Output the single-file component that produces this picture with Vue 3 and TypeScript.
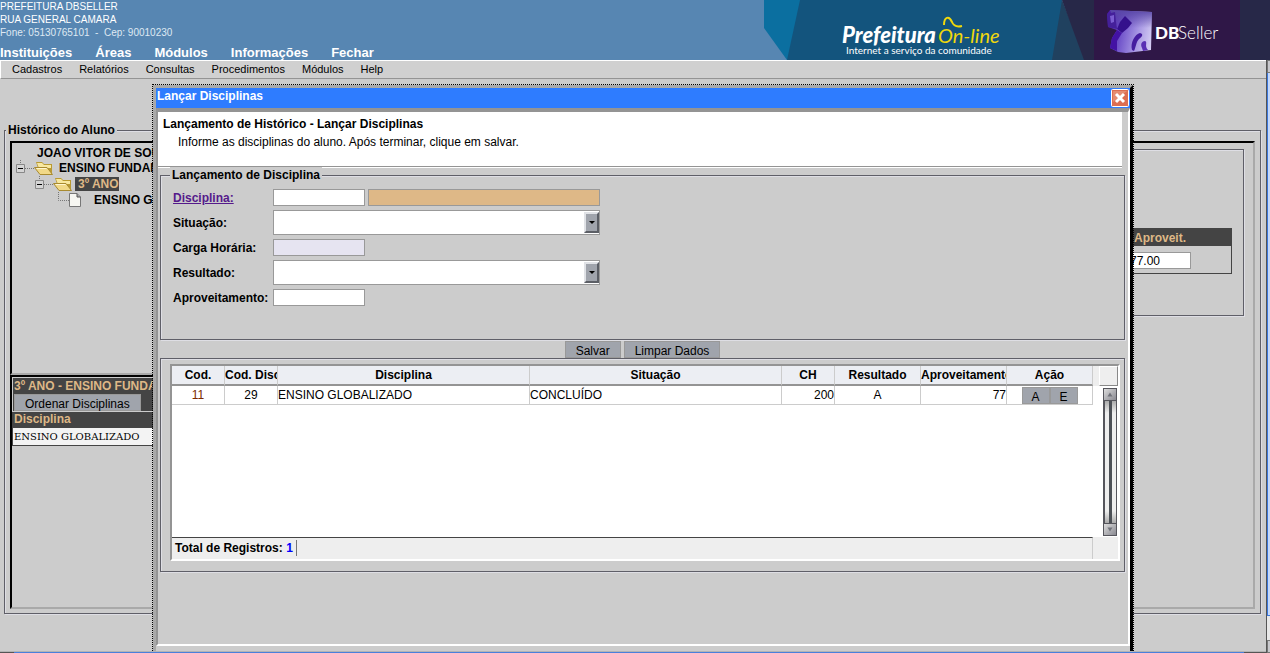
<script setup lang="ts">
import { ref } from 'vue'

interface Registro {
  cod: number
  codDisciplina: number
  disciplina: string
  situacao: string
  ch: number
  resultado: string
  aproveitamento: number
}

const menuPrincipal: string[] = ['Instituições', 'Áreas', 'Módulos', 'Informações', 'Fechar']
const menuModulo: string[] = ['Cadastros', 'Relatórios', 'Consultas', 'Procedimentos', 'Módulos', 'Help']

const registros = ref<Registro[]>([
  {
    cod: 11,
    codDisciplina: 29,
    disciplina: 'ENSINO GLOBALIZADO',
    situacao: 'CONCLUÍDO',
    ch: 200,
    resultado: 'A',
    aproveitamento: 77
  }
])

const codigo = ref('')
const descricao = ref('')
const situacao = ref('')
const carga = ref('')
const resultado = ref('')
const aproveitamento = ref('')
const notaFinal = ref('77.00')

function limpar(): void {
  codigo.value = ''
  descricao.value = ''
  situacao.value = ''
  carga.value = ''
  resultado.value = ''
  aproveitamento.value = ''
}
</script>

<template>
  <div class="page">
    <header class="banner">
      <div class="banner-info">
        <p>PREFEITURA DBSELLER</p>
        <p>RUA GENERAL CAMARA</p>
        <p class="phone">Fone: 05130765101&nbsp; -&nbsp; Cep: 90010230</p>
        <nav class="main-nav">
          <a v-for="item in menuPrincipal" :key="item" href="#">{{ item }}</a>
        </nav>
      </div>
      <svg class="brand" width="506" height="60" viewBox="0 0 506 60" role="img" aria-label="Prefeitura On-line">
        <defs>
          <linearGradient id="cube" x1="0" y1="0.4" x2="1" y2="0.6">
            <stop offset="0" stop-color="#4a1ba8" />
            <stop offset="0.35" stop-color="#7458cc" />
            <stop offset="0.7" stop-color="#a898e4" />
            <stop offset="1" stop-color="#d2caf2" />
          </linearGradient>
          <linearGradient id="top" x1="0" y1="0" x2="0" y2="1">
            <stop offset="0" stop-color="#5a48a8" />
            <stop offset="1" stop-color="#5a48a8" stop-opacity="0" />
          </linearGradient>
        </defs>
        <path d="M0 0H40V60H23L0 28Z" fill="#0b6fa0" />
        <path d="M36 0H298V60H23Z" fill="#13547d" />
        <path d="M298 0L288 60H322Z" fill="#20415f" />
        <path d="M298 0H506V60H320Z" fill="#272848" />
        <path d="M330 0H476V60H330Z" fill="#2f1747" />
        <text x="78" y="43" class="t-pref">Prefeitura</text>
        <text x="174" y="43" class="t-on">On-line</text>
        <path d="M180 25C180 17 185 15 188 22C190 27 194 27 198 26" fill="none" stroke="#f0d80c" stroke-width="2" />
        <text x="82" y="54" class="t-sub">Internet a serviço da comunidade</text>
        <path d="M346 10L388 12L387 50L362 53L354 52L346 48L348 38L353 30L344 27L343 14Z" fill="url(#cube)" />
        <path d="M346 10L388 12V28H352Z" fill="url(#top)" />
        <path d="M343 14L351 12L352 22L353 29L344 27Z" fill="#44209a" />
        <path d="M346 16L350 15V22L347 23Z" fill="#7a5cd0" />
        <path d="M361 16L368 23L364 28L358 33L353 29L356 22Z" fill="#34108c" />
        <path d="M353 30L358 33L353 41L353 51L346 48L348 38Z" fill="#4312a4" />
        <path d="M368 50C366 43 371 34 376 33C380 34 378 37 375 39C372 42 372 47 370 51Z" fill="#451ca0" />
        <path d="M378 48C376 44 378 41 381 41C384 42 380 46 384 50L379 51Z" fill="#5a30b4" />
        <text x="391" y="39" class="t-db">DB</text>
        <text x="414" y="39" class="t-seller">Seller</text>
      </svg>
    </header>

    <div class="below">
      <div class="content">
        <nav class="module-nav">
          <a v-for="item in menuModulo" :key="item" href="#">{{ item }}</a>
        </nav>

        <main class="workspace">
          <fieldset class="groove history">
            <legend>Histórico do Aluno</legend>
            <div class="history-grid">
              <div class="left-col">
                <section class="sunken tree">
                  <p class="node root-node">JOAO VITOR DE SOUZA</p>
                  <p class="node level-1">
                    <svg width="38" height="16" viewBox="0 0 38 16" aria-hidden="true">
                      <path d="M4.500 0V4M9 8.500H18" stroke="#777" stroke-dasharray="1 1" fill="none" />
                      <path d="M.5 4.500H8.500V12.500H.5Z" fill="#d5d5d5" stroke="#888" />
                      <path d="M2 8.500H7" stroke="#000" />
                      <path d="M20 2H26L28 4H36V14H24Z" fill="#b99a32" />
                      <path d="M21 3H26L28 5H35V8H24V11Z" fill="#f8e8a0" />
                      <path d="M18.500 7.500H31L36.500 14.500H24Z" fill="#f1d988" stroke="#a88a30" />
                      <path d="M20 8H30L31 9H21Z" fill="#fff6cf" />
                    </svg>
                    <span>ENSINO FUNDAMENTAL</span>
                  </p>
                  <p class="node level-2">
                    <svg width="38" height="16" viewBox="0 0 38 16" aria-hidden="true">
                      <path d="M4.500 0V4M9 8.500H18" stroke="#777" stroke-dasharray="1 1" fill="none" />
                      <path d="M.5 4.500H8.500V12.500H.5Z" fill="#d5d5d5" stroke="#888" />
                      <path d="M2 8.500H7" stroke="#000" />
                      <path d="M20 2H26L28 4H36V14H24Z" fill="#b99a32" />
                      <path d="M21 3H26L28 5H35V8H24V11Z" fill="#f8e8a0" />
                      <path d="M18.500 7.500H31L36.500 14.500H24Z" fill="#f1d988" stroke="#a88a30" />
                      <path d="M20 8H30L31 9H21Z" fill="#fff6cf" />
                    </svg>
                    <span class="selected">3º ANO</span>
                  </p>
                  <p class="node level-3">
                    <svg width="24" height="16" viewBox="0 0 24 16" aria-hidden="true">
                      <path d="M.5 0V8.500H11" stroke="#777" stroke-dasharray="1 1" fill="none" />
                      <path d="M11.500 1.500H19L22.500 5V14.500H11.500Z" fill="#f7f7f2" stroke="#777" />
                      <path d="M19 1.500V5H22.500" fill="#aaa" stroke="#555" />
                    </svg>
                    <span>ENSINO GLOBALIZADO</span>
                  </p>
                </section>
                <section class="sunken grades">
                  <div class="grades-head">
                    <h2>3º ANO - ENSINO FUNDAMENTAL</h2>
                    <button type="button" class="btn order">Ordenar Disciplinas</button>
                  </div>
                  <table class="grades-table">
                    <thead><tr><th>Disciplina</th></tr></thead>
                    <tbody><tr><td>ENSINO GLOBALIZADO</td></tr></tbody>
                  </table>
                </section>
              </div>
              <section class="sunken details">
                <div class="groove-box">
                  <table class="score">
                    <thead><tr><th><label for="nota">Aproveit.</label></th></tr></thead>
                    <tbody><tr><td><input id="nota" v-model="notaFinal" type="text" class="field short" /></td></tr></tbody>
                  </table>
                </div>
              </section>
            </div>
          </fieldset>

          <section class="window" role="dialog" aria-labelledby="win-title">
            <div class="window-edge">
              <div class="titlebar">
                <h1 id="win-title">Lançar Disciplinas</h1>
                <button type="button" class="close" aria-label="Fechar janela">
                  <svg width="18" height="18" viewBox="0 0 18 18" aria-hidden="true">
                    <rect x=".5" y=".5" width="17" height="17" rx="1" fill="#dc6e52" stroke="#fff" />
                    <path d="M2 2H16L2 13Z" fill="#e58c72" />
                    <path d="M5 5L13 13M13 5L5 13" stroke="#fff" stroke-width="3" />
                  </svg>
                </button>
              </div>
              <div class="window-body">
                <div class="message">
                  <h2>Lançamento de Histórico - Lançar Disciplinas</h2>
                  <p>Informe as disciplinas do aluno. Após terminar, clique em salvar.</p>
                </div>

                <form class="entry" @submit.prevent>
                  <fieldset class="groove form-box">
                    <legend>Lançamento de Disciplina</legend>
                    <div class="form-grid">
                      <label for="codigo"><a href="#">Disciplina:</a></label>
                      <div class="pair">
                        <input id="codigo" v-model="codigo" type="text" class="field short" />
                        <input v-model="descricao" type="text" class="field locked" aria-label="Descrição da disciplina" readonly />
                      </div>
                      <label for="situacao">Situação:</label>
                      <div class="drop">
                        <select id="situacao" v-model="situacao"><option value=""></option></select>
                        <span class="arrow"></span>
                      </div>
                      <label for="carga">Carga Horária:</label>
                      <input id="carga" v-model="carga" type="text" class="field short optional" />
                      <label for="resultado">Resultado:</label>
                      <div class="drop">
                        <select id="resultado" v-model="resultado"><option value=""></option></select>
                        <span class="arrow"></span>
                      </div>
                      <label for="aprov">Aproveitamento:</label>
                      <input id="aprov" v-model="aproveitamento" type="text" class="field short" />
                    </div>
                  </fieldset>
                  <div class="actions">
                    <button type="submit" class="btn">Salvar</button>
                    <button type="button" class="btn" @click="limpar">Limpar Dados</button>
                  </div>
                </form>

                <div class="groove-box list-box">
                  <div class="datagrid">
                    <div class="datagrid-main">
                      <table class="records">
                        <colgroup>
                          <col class="c-small" /><col class="c-small" /><col /><col />
                          <col class="c-small" /><col class="c-mid" /><col class="c-mid" /><col class="c-mid" />
                        </colgroup>
                        <thead>
                          <tr>
                            <th>Cod.</th><th>Cod. Disciplina</th><th>Disciplina</th><th>Situação</th>
                            <th>CH</th><th>Resultado</th><th>Aproveitamento</th><th>Ação</th>
                          </tr>
                        </thead>
                        <tbody>
                          <tr v-for="r in registros" :key="r.cod">
                            <td class="center code">{{ r.cod }}</td>
                            <td class="center">{{ r.codDisciplina }}</td>
                            <td>{{ r.disciplina }}</td>
                            <td>{{ r.situacao }}</td>
                            <td class="right">{{ r.ch }}</td>
                            <td class="center">{{ r.resultado }}</td>
                            <td class="right">{{ r.aproveitamento }}</td>
                            <td class="center">
                              <div class="row-actions">
                                <button type="button" class="btn" title="Alterar">A</button>
                                <button type="button" class="btn" title="Excluir">E</button>
                              </div>
                            </td>
                          </tr>
                        </tbody>
                      </table>
                      <div class="total"><span>Total de Registros: <b>{{ registros.length }}</b></span></div>
                    </div>
                    <div class="datagrid-side">
                      <div class="side-head"></div>
                      <div class="scroll">
                        <svg class="scroll-end" viewBox="0 0 13 13" aria-hidden="true"><path d="M6.500 4L9.500 9H3.500Z" /></svg>
                        <div class="scroll-track"></div>
                        <svg class="scroll-end" viewBox="0 0 13 13" aria-hidden="true"><path d="M6.500 9L3.500 4H9.500Z" /></svg>
                      </div>
                    </div>
                  </div>
                </div>
              </div>
            </div>
          </section>
        </main>
        <div class="h-scroll"></div>
      </div>
      <div class="v-scroll">
        <i class="v-button"></i>
        <i class="v-thumb"></i>
        <i class="v-rest"></i>
        <i class="v-button"></i>
      </div>
    </div>
  </div>
</template>

<style>
body {
  background: #ccc;
}
</style>

<style scoped>
* {
  box-sizing: border-box;
}

.page {
  display: flex;
  flex-direction: column;
  height: 100vh;
  min-height: 640px;
  overflow: hidden;
  background: #ccc;
  color: #000;
  font: 12px/16px "Liberation Sans", Arial, sans-serif;
}

p,
h1,
h2 {
  margin: 0;
  font-size: inherit;
}

table {
  border-collapse: separate;
  border-spacing: 0;
}

/* Banner */
.banner {
  flex: none;
  display: flex;
  justify-content: space-between;
  height: 60px;
  background: #5786b2;
  color: #fff;
}

.banner-info {
  font-size: 10px;
  line-height: 13px;
  white-space: nowrap;
}

.phone {
  color: #dfe9f2;
}

.main-nav {
  display: flex;
  gap: 23px;
  padding-top: 6px;
  font-size: 13px;
  line-height: 15px;
  font-weight: bold;
}

.main-nav a {
  color: #fff;
  text-decoration: none;
}

.brand {
  flex: none;
}

.t-pref {
  font: italic 900 22px Lato, sans-serif;
  fill: #fff;
}

.t-on {
  font: italic 400 20px Lato, sans-serif;
  fill: #f0d80c;
}

.t-sub {
  font: 10px Lato, sans-serif;
  fill: #fff;
}

.t-db {
  font: 900 17px Lato, sans-serif;
  fill: #fff;
}

.t-seller {
  font: 300 17px Lato, sans-serif;
  fill: #fff;
}

/* Page frame */
.below {
  flex: 1;
  display: flex;
  min-height: 0;
}

.content {
  flex: 1;
  display: flex;
  flex-direction: column;
  min-width: 0;
}

.module-nav {
  flex: none;
  display: flex;
  gap: 17px;
  height: 19px;
  padding-left: 11px;
  border: 1px solid #fff;
  border-width: 1px 0 1px 1px;
  border-bottom-color: #949494;
  background: #d0d0d0;
  font-size: 11px;
  line-height: 17px;
}

.module-nav a {
  color: #000;
  text-decoration: none;
}

.workspace {
  flex: 1;
  position: relative;
  min-height: 0;
  padding: 43px 5px 37px 4px;
}

.h-scroll {
  flex: none;
  height: 2px;
  border-top: 1px solid #b4b4b4;
  background: linear-gradient(90deg, #555 14px, #4a80dc 14px, #4a80dc calc(100% - 22px), #555 0);
}

.v-scroll {
  flex: none;
  display: flex;
  flex-direction: column;
  width: 4px;
  border-left: 1px solid #555;
  background: #eee;
}

.v-button {
  height: 13px;
  border: 1px solid #777;
  border-right: 0;
  background: #c8c8cc;
}

.v-thumb {
  flex: 1;
  border-left: 1px solid #3c78dc;
  border-bottom: 1px solid #3c78dc;
  background: #c4d8fa;
}

.v-rest {
  height: 24px;
  background: #e8e8e8;
}

/* Frames */
.groove {
  min-width: 0;
  margin: 0;
  padding: 0;
  border: 1px solid #5f5f68;
  box-shadow: 1px 1px 0 #dedee4, inset 1px 1px 0 #dedee4;
}

.groove > legend {
  margin: 0;
  padding: 0 2px;
  background: #ccc;
  font-weight: bold;
}

.groove-box {
  border: 1px solid #5f5f68;
  box-shadow: 1px 1px 0 #dedee4, inset 1px 1px 0 #dedee4;
}

.sunken {
  border: 2px solid #000;
  border-right-color: #a9a9a9;
  border-bottom-color: #a9a9a9;
}

/* History behind the window */
.history {
  height: 100%;
  padding: 3px 5px 4px;
}

.history > legend {
  margin-left: -4px;
}

.history-grid {
  display: grid;
  grid-template-columns: 300px 1fr;
  height: 100%;
}

.left-col {
  display: grid;
  grid-template-rows: 1fr 1fr;
  min-height: 0;
}

.tree {
  overflow: hidden;
  font-weight: bold;
}

.node {
  display: flex;
  align-items: center;
  height: 16px;
  gap: 5px;
  white-space: nowrap;
}

.root-node {
  height: 17px;
  padding: 2px 0 0 25px;
}

.level-1 {
  padding-left: 4px;
}

.level-2 {
  padding-left: 23px;
}

.level-3 {
  padding-left: 46px;
  gap: 12px;
}

.node .selected {
  line-height: 14px;
  padding-left: 3px;
  margin-left: -3px;
  background: #444;
  color: #deb887;
}

.grades-head {
  margin: 1px 0 0 1px;
  padding: 1px 0 0 1px;
  background: #444;
}

.grades-head h2 {
  color: #deb887;
  line-height: 15px;
  white-space: nowrap;
}

.grades-table {
  width: 100%;
}

.grades-table th {
  height: 16px;
  padding: 0 2px;
  border-top: 1px solid #ccc;
  background: #444;
  color: #deb887;
  line-height: 15px;
  text-align: left;
}

.grades-table td {
  height: 19px;
  padding: 0 1px;
  border: 1px solid #444;
  background: #f3f3f3;
  font-family: "DejaVu Serif", serif;
  font-size: 10px;
}

.details {
  padding: 6px 9px;
}

.details .groove-box {
  display: flex;
  justify-content: flex-end;
  height: 167px;
  padding: 78px 11px 0;
}

.score {
  align-self: flex-start;
  border: 1px solid #444;
}

.score th {
  width: 104px;
  height: 17px;
  padding: 0 0 0 7px;
  background: #444;
  color: #deb887;
  text-align: left;
}

.score td {
  height: 27px;
  padding: 2px 0 0;
}

.score .short {
  width: 64px;
}

/* Window */
.window {
  position: absolute;
  top: 5px;
  right: 132px;
  bottom: 0;
  left: 152px;
  border: 1px dotted #000;
  border-bottom: 0;
}

.window-edge {
  display: flex;
  flex-direction: column;
  height: 100%;
  padding-bottom: 5px;
  border: 3px solid #a9a9a9;
  border-right-color: #000;
  border-bottom: 0;
  background: #ccc;
}

.titlebar {
  flex: none;
  display: flex;
  justify-content: space-between;
  height: 20px;
  padding: 1px 1px 0;
  background: #2e7cff;
  color: #fff;
}

.titlebar h1 {
  line-height: 15px;
}

.close {
  width: 18px;
  height: 18px;
  padding: 0;
  border: 0;
  background: none;
}

.close svg {
  display: block;
}

.window-body {
  flex: 1;
  min-height: 0;
  border: solid;
  border-width: 4px 2px 2px;
  border-color: #949494 #fff #fff #949494;
}

.message {
  height: 55px;
  margin-right: 6px;
  padding: 4px 5px;
  border-bottom: 1px solid #949494;
  box-shadow: 0 1px 0 #fff;
  background: #fff;
}

.message h2 {
  line-height: 16px;
}

.message p {
  padding: 2px 15px;
}

.entry {
  padding: 0 3px 0 2px;
}

.form-box {
  padding: 2px 11px 29px;
}

.form-box > legend {
  margin-left: -2px;
}

.form-grid {
  display: grid;
  grid-template-columns: 100px 327px;
  grid-auto-rows: 25px;
  align-items: center;
  padding-left: 1px;
}

.form-grid label {
  font-weight: bold;
  white-space: nowrap;
}

.form-grid label a {
  color: #551a8b;
}

.field {
  height: 17px;
  padding: 0 2px;
  border: 1px solid #999;
  border-radius: 0;
  background: #fff;
  font: inherit;
}

.short {
  width: 92px;
}

.optional {
  background: #e6e4f1;
}

.pair {
  display: flex;
  gap: 3px;
}

.locked {
  flex: 1;
  min-width: 0;
  background: #deb887;
}

.drop {
  position: relative;
  height: 25px;
}

.drop select {
  display: block;
  width: 100%;
  height: 100%;
  border: 1px solid #999;
  border-radius: 0;
  background: #fff;
  font: inherit;
  appearance: none;
}

.arrow {
  position: absolute;
  top: 2px;
  right: 1px;
  bottom: 2px;
  display: grid;
  place-items: center;
  width: 15px;
  border: 2px solid #e0e2e6;
  border-right-color: #5c5f66;
  border-bottom-color: #5c5f66;
  background: #a0a4ac;
  pointer-events: none;
}

.arrow::after {
  content: "";
  border: 3px solid transparent;
  border-top-color: #000;
  border-bottom: 0;
}

.btn {
  height: 17px;
  padding: 2px 10px 0;
  border: 1px solid #999;
  border-radius: 0;
  background: #a0a4ac;
  color: #000;
  font: 12px/14px "Liberation Sans", Arial, sans-serif;
}

.order {
  display: block;
}

.actions {
  display: flex;
  justify-content: center;
  gap: 3px;
  height: 18px;
  padding-top: 1px;
}

.list-box {
  margin: 0 3px 0 2px;
  padding: 5px 4px 10px 9px;
}

/* Records grid */
.datagrid {
  display: flex;
  height: 197px;
  border: 2px solid #fff;
  border-top-color: #949494;
  border-left-color: #949494;
  background: #fff;
}

.datagrid-main {
  flex: 1;
  display: flex;
  flex-direction: column;
  justify-content: space-between;
  min-width: 0;
}

.records {
  width: 100%;
  table-layout: fixed;
}

.c-small {
  width: 53px;
}

.c-mid {
  width: 86px;
}

.records th {
  height: 20px;
  padding: 0;
  overflow: hidden;
  border-right: 1px solid #ccc;
  border-bottom: 2px solid #949494;
  background: #eceef3;
  white-space: nowrap;
}

.records td {
  height: 19px;
  padding: 1px 0 0;
  border-right: 1px solid #ccc;
  border-bottom: 1px solid #ccc;
  line-height: 17px;
}

.records .center {
  text-align: center;
}

.records .right {
  text-align: right;
}

.records .code {
  color: #7a2a00;
}

.row-actions {
  display: flex;
  justify-content: center;
}

.row-actions .btn {
  width: 28px;
  padding: 2px 0 0;
}

.total {
  height: 22px;
  padding: 2px 3px;
  border-top: 1px solid #444;
  border-right: 1px solid #ccc;
  background: #eee;
  font-weight: bold;
}

.total span {
  display: inline-block;
  padding-right: 3px;
  border-right: 1px solid #777;
}

.total b {
  color: #00f;
}

.datagrid-side {
  flex: none;
  display: flex;
  flex-direction: column;
  width: 25px;
  background: #eee;
}

.side-head {
  height: 20px;
  margin-left: 6px;
  border: 1px solid #fff;
  border-right-color: #888;
  border-bottom-color: #888;
}

.scroll {
  display: flex;
  flex-direction: column;
  height: 151px;
  padding: 2px 1px 1px 10px;
  background: #fff;
}

.scroll-end {
  flex: none;
  display: block;
  height: 13px;
  border: 1px solid #55555c;
  background: linear-gradient(135deg, #ddd, #888890);
  fill: #70727a;
}

.scroll-track {
  flex: 1;
  border: solid #55555c;
  border-width: 0 1px 0 2px;
  background:
    linear-gradient(90deg, transparent 4px, #4c5056 4px, #4c5056 7px, transparent 7px),
    linear-gradient(#aaa, #eee 12px, #eee calc(100% - 12px), #aaa);
}
</style>
